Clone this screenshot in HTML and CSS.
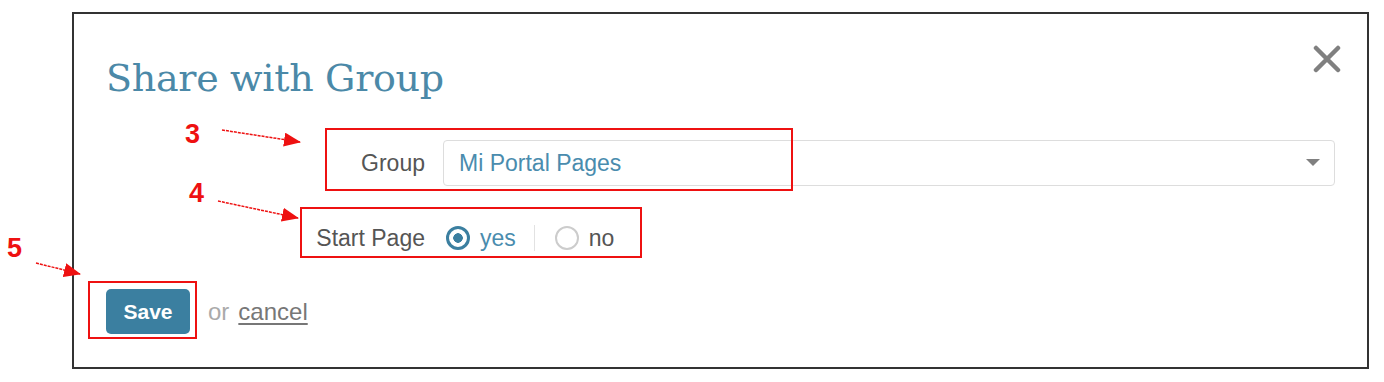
FILE: index.html
```html
<!DOCTYPE html>
<html lang="en">
  <head>
    <meta charset="UTF-8" />
    <meta name="viewport" content="width=device-width, initial-scale=1.0" />
    <title>Share with Group</title>
    <link rel="stylesheet" href="styles.css">
  </head>
  <body>
    <div class="dialog">
      <div class="dialog-head">
        <h1>Share with Group</h1>
        <span class="close">
          <svg width="28" height="28" viewBox="0 0 28 28">
            <path d="M3 3 L25 25 M25 3 L3 25" stroke="#808080" stroke-width="4.5" stroke-linecap="round" />
          </svg>
        </span>
      </div>

      <div class="form">
        <label class="field-label">Group</label>
        <div class="select">
          <span>Mi Portal Pages</span>
          <svg width="14" height="8" viewBox="0 0 14 8"><path d="M0 0 L14 0 L7 7 Z" fill="#808080" /></svg>
        </div>

        <label class="field-label">Start Page</label>
        <div class="radios">
          <span class="radio checked"></span>
          <span class="radio-text yes">yes</span>
          <span class="sep"></span>
          <span class="radio"></span>
          <span class="radio-text">no</span>
        </div>
      </div>

      <div class="actions">
        <button class="save">Save</button>
        <span class="or">or</span>
        <a class="cancel" href="#">cancel</a>
      </div>
    </div>

    <!-- annotations -->
    <div class="mark num3">3</div>
    <div class="mark num4">4</div>
    <div class="mark num5">5</div>
    <div class="box box3"></div>
    <div class="box box4"></div>
    <div class="box box5"></div>
    <svg class="arrows" width="1384" height="382">
      <defs>
        <marker id="head" markerWidth="17" markerHeight="14" refX="16" refY="7" orient="auto" markerUnits="userSpaceOnUse" viewBox="0 0 17 14">
          <path d="M0 0 L17 7 L0 14 Z" fill="#ee1111" />
        </marker>
      </defs>
      <line x1="222" y1="130" x2="300" y2="142" />
      <line x1="218" y1="201" x2="298" y2="218" />
      <line x1="36" y1="263" x2="80" y2="274" />
    </svg>
  </body>
</html>
```

FILE: styles.css
```css
body {
  margin: 0;
  background-color: #fff;
  font-family: 'Liberation Sans', Arial, sans-serif;
  color: #555;
}

.dialog {
  box-sizing: border-box;
  width: 1297px;
  height: 357px;
  margin: 12px 0 0 72px;
  border: 2px solid #333;
  padding: 0 32px 0 32px;
}

.dialog-head {
  display: flex;
  justify-content: space-between;
  align-items: flex-start;
  padding-top: 40px;
}

h1 {
  margin: 0;
  font-family: 'DejaVu Serif', 'Liberation Serif', serif;
  font-weight: normal;
  font-size: 38px;
  line-height: 48px;
  color: #4b89a8;
  letter-spacing: -0.3px;
}

.close {
  margin-top: -9px;
  margin-right: -6px;
}

.form {
  display: grid;
  grid-template-columns: 319px 1fr;
  column-gap: 18px;
  row-gap: 38px;
  align-items: center;
  margin-top: 38px;
}

.field-label {
  text-align: right;
  font-size: 23px;
  color: #555;
}

.select {
  display: flex;
  justify-content: space-between;
  align-items: center;
  height: 46px;
  box-sizing: border-box;
  border: 1px solid #ddd;
  border-radius: 4px;
  padding: 0 14px 0 15px;
  font-size: 23px;
  color: #4a8cae;
}

.radios {
  display: flex;
  align-items: center;
  height: 28px;
  font-size: 23px;
}

.radio {
  box-sizing: border-box;
  width: 24px;
  height: 24px;
  margin-left: 3px;
  border: 2px solid #ccc;
  border-radius: 50%;
}

.radio.checked {
  border: 3px solid #3b7fa0;
  background: radial-gradient(circle, #3b7fa0 0 4.5px, #fff 5px);
}

.radio-text {
  margin-left: 10px;
  color: #555;
}

.radio-text.yes {
  color: #4a8cae;
}

.sep {
  width: 1px;
  height: 26px;
  background-color: #e2e2e2;
  margin: 0 17px 0 18px;
}

.actions {
  display: flex;
  align-items: center;
  margin-top: 37px;
}

.save {
  width: 84px;
  height: 45px;
  border: none;
  border-radius: 5px;
  background-color: #3b7fa0;
  color: #fff;
  font-family: 'Liberation Sans', Arial, sans-serif;
  font-weight: bold;
  font-size: 21px;
  padding: 0;
}

.or {
  margin-left: 18px;
  font-size: 24px;
  color: #aaa;
}

.cancel {
  margin-left: 9px;
  font-size: 24px;
  color: #777;
  text-decoration: underline;
  text-underline-offset: 3px;
}

.mark {
  position: absolute;
  font-family: 'Liberation Sans', Arial, sans-serif;
  font-weight: bold;
  font-size: 27px;
  line-height: 26px;
  color: #ee1111;
}

.num3 { left: 185px; top: 121px; }
.num4 { left: 189px; top: 180px; }
.num5 { left: 7px; top: 235px; }

.box {
  position: absolute;
  box-sizing: border-box;
  border: 2px solid #ee1111;
}

.box3 { left: 325px; top: 128px; width: 468px; height: 63px; }
.box4 { left: 300px; top: 207px; width: 342px; height: 51px; }
.box5 { left: 88px; top: 281px; width: 109px; height: 58px; }

.arrows {
  position: absolute;
  left: 0;
  top: 0;
  pointer-events: none;
}

.arrows line {
  stroke: #ee1111;
  stroke-width: 1.5;
  stroke-dasharray: 3 1;
  marker-end: url(#head);
}
```
